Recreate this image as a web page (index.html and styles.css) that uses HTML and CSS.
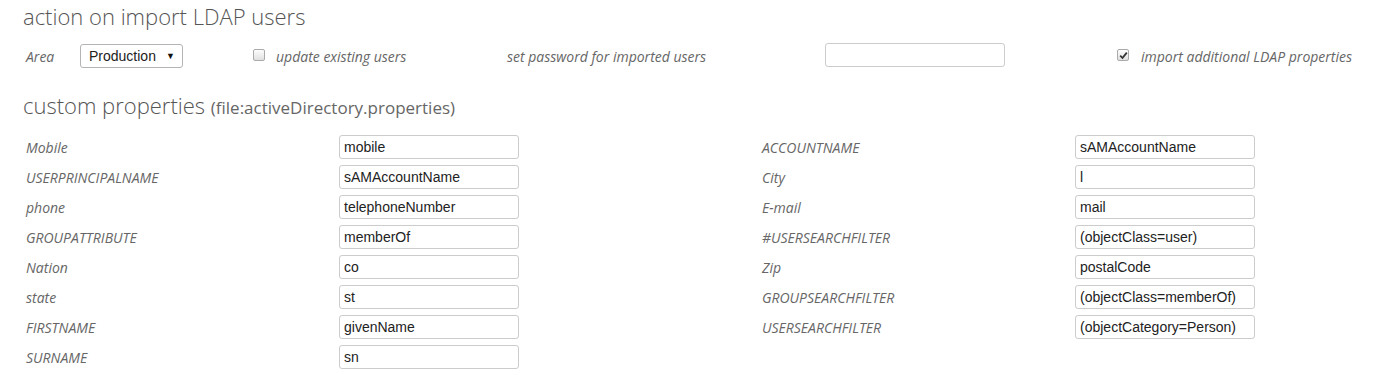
FILE: index.html
```html
<!DOCTYPE html>
<html>
<head>
<meta charset="utf-8">
<link rel="stylesheet" href="styles.css">
</head>
<body>
<div class="page">
  <h1 class="title">action on import LDAP users</h1>
  <div class="actions">
    <span class="lbl area-lbl">Area</span>
    <div class="select-wrap">
      <span class="select-text">Production</span>
      <span class="select-arrow">▼</span>
    </div>
    <span class="cb cb-update"></span>
    <span class="lbl update-lbl">update existing users</span>
    <span class="lbl pw-lbl">set password for imported users</span>
    <span class="field pw-field"></span>
    <span class="cb cb-checked">
      <svg width="9" height="9" viewBox="0 0 9 9"><path d="M1.2 4.6 L3.5 7 L7.8 1.6" fill="none" stroke="#333" stroke-width="1.8"/></svg>
    </span>
    <span class="lbl import-lbl">import additional LDAP properties</span>
  </div>
  <h2 class="subtitle">custom properties <small>(file:activeDirectory.properties)</small></h2>
  <div class="props">
    <div class="col">
      <div class="row"><span class="lbl plabel">Mobile</span><span class="field">mobile</span></div>
      <div class="row"><span class="lbl plabel">USERPRINCIPALNAME</span><span class="field">sAMAccountName</span></div>
      <div class="row"><span class="lbl plabel">phone</span><span class="field">telephoneNumber</span></div>
      <div class="row"><span class="lbl plabel">GROUPATTRIBUTE</span><span class="field">memberOf</span></div>
      <div class="row"><span class="lbl plabel">Nation</span><span class="field">co</span></div>
      <div class="row"><span class="lbl plabel">state</span><span class="field">st</span></div>
      <div class="row"><span class="lbl plabel">FIRSTNAME</span><span class="field">givenName</span></div>
      <div class="row"><span class="lbl plabel">SURNAME</span><span class="field">sn</span></div>
    </div>
    <div class="col">
      <div class="row"><span class="lbl plabel">ACCOUNTNAME</span><span class="field">sAMAccountName</span></div>
      <div class="row"><span class="lbl plabel">City</span><span class="field">l</span></div>
      <div class="row"><span class="lbl plabel">E-mail</span><span class="field">mail</span></div>
      <div class="row"><span class="lbl plabel">#USERSEARCHFILTER</span><span class="field">(objectClass=user)</span></div>
      <div class="row"><span class="lbl plabel">Zip</span><span class="field">postalCode</span></div>
      <div class="row"><span class="lbl plabel">GROUPSEARCHFILTER</span><span class="field">(objectClass=memberOf)</span></div>
      <div class="row"><span class="lbl plabel">USERSEARCHFILTER</span><span class="field">(objectCategory=Person)</span></div>
    </div>
  </div>
</div>
</body>
</html>
```

FILE: styles.css
```css
* { box-sizing: border-box; }
html, body { margin: 0; padding: 0; background: #fff; }
body { font-family: "Open Sans", sans-serif; color: #666; }
.page { padding: 0 0 0 23px; }
.title {
  margin: 0;
  padding-top: 1px;
  font-size: 22px;
  font-weight: 300;
  color: #555;
  line-height: 30px;
  height: 34px;
}
.lbl {
  font-style: italic;
  font-size: 14px;
  color: #666;
  white-space: nowrap;
}
.actions {
  display: flex;
  align-items: center;
  height: 44px;
  padding-left: 3px;
}
.area-lbl { width: 54px; }
.select-wrap {
  width: 103px;
  height: 24px;
  border: 1px solid #b4b4b4;
  border-radius: 3px;
  display: flex;
  align-items: center;
  justify-content: space-between;
  padding: 0 7px 0 8px;
  font-family: "Liberation Sans", Arial, sans-serif;
  font-size: 14px;
  color: #222;
}
.select-arrow { font-size: 9px; color: #111; }
.cb {
  width: 12px;
  height: 12px;
  border: 1px solid #aaa;
  border-radius: 2px;
  background: linear-gradient(#fdfdfd, #e0e0e0);
  display: inline-flex;
  align-items: center;
  justify-content: center;
  margin-top: -2px;
}
.cb-update { margin-left: 70px; }
.update-lbl { margin-left: 11px; width: 231px; }
.pw-lbl { width: 318px; }
.field {
  display: inline-flex;
  align-items: center;
  width: 180px;
  height: 24px;
  border: 1px solid #ccc;
  border-radius: 3px;
  padding: 0 4px;
  font-family: "Liberation Sans", Arial, sans-serif;
  font-size: 14px;
  color: #222;
  background: #fff;
}
.pw-field { margin-top: -2px; }
.cb-checked { margin-left: 112px; }
.import-lbl { margin-left: 12px; }
.subtitle {
  margin: 0;
  font-size: 22px;
  font-weight: 300;
  color: #555;
  line-height: 30px;
  height: 54px;
  padding-top: 12px;
}
.subtitle small { font-size: 17px; font-weight: 400; color: #666; }
.props {
  display: grid;
  grid-template-columns: 736px 1fr;
  padding-left: 3px;
}
.row {
  display: flex;
  align-items: center;
  height: 30px;
}
.plabel { width: 313px; }
```
